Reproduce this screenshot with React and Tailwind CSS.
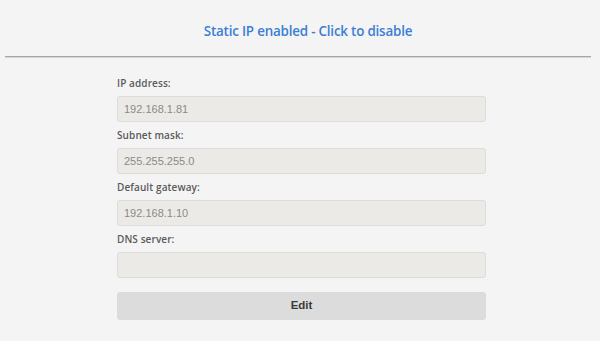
export default function App() {
  const fields = [
    ["IP address:", "192.168.1.81"],
    ["Subnet mask:", "255.255.255.0"],
    ["Default gateway:", "192.168.1.10"],
    ["DNS server:", ""],
  ];
  return (
    <div className="w-[600px] h-[341px] bg-[#f5f4f4] flex flex-col overflow-hidden">
      <div className="h-[56px] flex items-center justify-center pl-[16px] pt-[7px]">
        <span className="text-[13.4px] font-semibold text-[#3a7fd5] font-['Open_Sans',sans-serif] tracking-[-0.2px]">
          Static IP enabled - Click to disable
        </span>
      </div>
      <div className="mx-[5px] mr-[9px] h-[2px] bg-[#a6a6a6] border-b border-[#d8d8d8]"></div>
      <div className="flex flex-col w-[369px] ml-[117px] pt-[18px]">
        {fields.map(([label, value]) => (
          <div key={label} className="flex flex-col h-[52px]">
            <div className="h-[20px] text-[10px] font-semibold text-[#5a5a5a] font-['Open_Sans',sans-serif] leading-[14px] tracking-[0.1px]">
              {label}
            </div>
            <div className="h-[26px] bg-[#ebeae6] border border-[#dddcd8] rounded-[3px] flex items-center px-[6px] text-[11px] text-[#8a8a8a] font-['Liberation_Sans',sans-serif]">
              {value}
            </div>
          </div>
        ))}
        <div className="mt-[8px] h-[28px] bg-[#dcdcdc] rounded-[3px] flex items-center justify-center text-[11.5px] font-bold text-[#3a3a3a] font-['Liberation_Sans',sans-serif]">
          Edit
        </div>
      </div>
    </div>
  );
}
